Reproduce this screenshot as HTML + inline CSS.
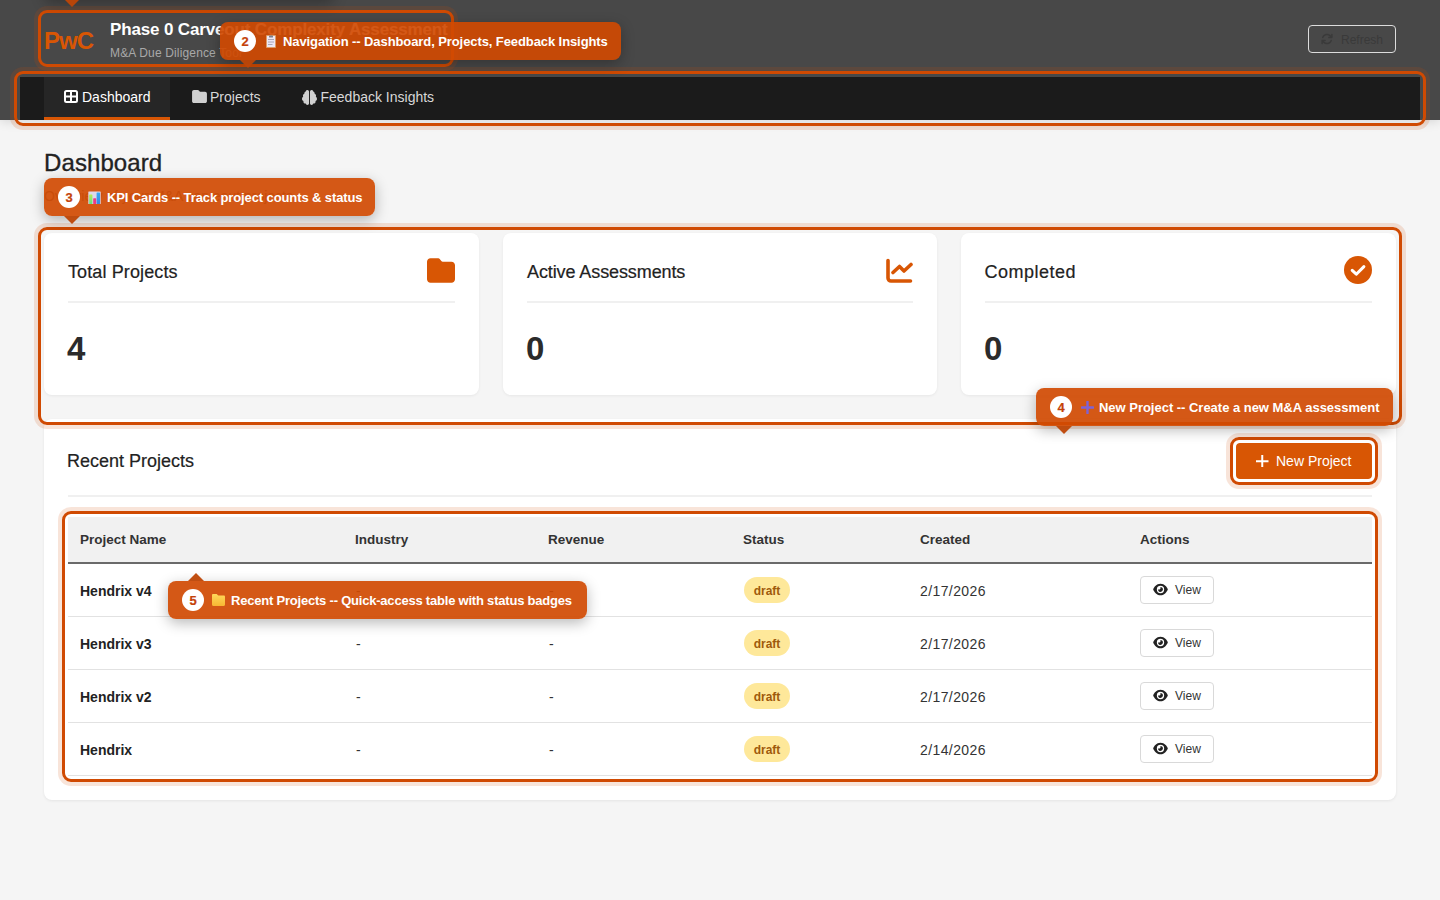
<!DOCTYPE html>
<html>
<head>
<meta charset="utf-8">
<style>
*{box-sizing:border-box;margin:0;padding:0}
html,body{width:1440px;height:900px;overflow:hidden}
body{background:#f5f5f5;font-family:"Liberation Sans",sans-serif;position:relative;color:#222}
.abs{position:absolute;white-space:nowrap}
/* header */
#hdr{position:absolute;left:0;top:0;width:1440px;height:120px;background:#484848;box-shadow:0 2px 10px rgba(0,0,0,0.12)}
#nav{position:absolute;left:20px;top:77px;width:1400px;height:43px;background:#1b1b1b}
.tab{position:absolute;top:0;height:43px}
.tab.active{background:#262626;border-bottom:3px solid #d85604}
.navtxt{font-size:14px;line-height:14px;color:#d8d8d8}
/* rings */
.ring{position:absolute;z-index:5;border:3px solid #d04a02;border-radius:9px;box-shadow:0 0 0 4px rgba(208,74,2,0.15)}
/* cards */
.card{position:absolute;background:#fff;border-radius:8px;box-shadow:0 1px 3px rgba(0,0,0,0.06)}
.kpititle{font-size:18px;line-height:18px;color:#222;-webkit-text-stroke:0.2px #222}
.kpinum{font-size:33px;line-height:33px;font-weight:700;color:#2b2b2b;margin-top:-1px}
.divider{position:absolute;height:2px;background:#f0f0f0}
/* table */
.th{font-size:13.5px;line-height:13px;font-weight:700;color:#333}
.td{font-size:14px;line-height:14px;color:#333;letter-spacing:0.4px}
.tdb{font-size:14px;line-height:14px;font-weight:700;color:#222}
.rowline{position:absolute;left:68px;width:1304px;height:1px;background:#e2e2e2}
.badge{position:absolute;width:46px;height:26px;border-radius:13px;background:#fee89a;color:#9e5a0c;font-size:12px;font-weight:700;line-height:26px;padding-top:1px;text-align:center}
.vbtn{position:absolute;width:74px;height:28px;border:1px solid #d9d9d9;border-radius:4px;background:#fff}
/* tooltips */
.tip{position:absolute;z-index:10;height:38px;border-radius:8px;background:rgba(208,74,2,0.92);box-shadow:0 4px 14px rgba(0,0,0,0.28);color:#fff}
.tipnum{position:absolute;left:14px;top:8px;width:22px;height:22px;border-radius:11px;background:#fff;color:#c4420a;font-size:13px;font-weight:700;line-height:22px;padding-top:1px;text-align:center;-webkit-text-stroke:0.2px #c4420a}
.tiptxt{position:absolute;top:12.6px;font-size:13px;line-height:13px;font-weight:700;color:#fff}
.arrow-dn{position:absolute;z-index:10;width:0;height:0;border-left:8px solid transparent;border-right:8px solid transparent;border-top:8px solid rgba(190,70,6,0.95)}
.arrow-up{position:absolute;z-index:10;width:0;height:0;border-left:8px solid transparent;border-right:8px solid transparent;border-bottom:8px solid rgba(190,70,6,0.95)}
</style>
</head>
<body>

<!-- HEADER -->
<div id="hdr">
  <div class="abs" style="left:44px;top:29px;font-size:24px;line-height:24px;font-weight:700;color:#d85604;letter-spacing:-1px">PwC</div>
  <div class="abs" style="left:110px;top:21px;font-size:17px;line-height:17px;font-weight:700;color:#fff;letter-spacing:-0.15px">Phase 0 Carveout Complexity Assessment</div>
  <div class="abs" style="left:110px;top:47px;font-size:12px;line-height:12px;color:#a9a9a9;letter-spacing:0.15px">M&amp;A Due Diligence Tool</div>
  <div style="position:absolute;left:1308px;top:25px;width:88px;height:28px;border:1px solid #dcdcdc;border-radius:4px">
    <svg style="position:absolute;left:12px;top:7px" width="12" height="12" viewBox="0 0 512 512"><path fill="#3a3a3a" d="M105.1 202.6c7.7-21.8 20.2-42.3 37.8-59.8c62.5-62.5 163.8-62.5 226.3 0L386.3 160H336c-17.7 0-32 14.3-32 32s14.3 32 32 32H463.5c0 0 0 0 0 0h.4c17.7 0 32-14.3 32-32V64c0-17.7-14.3-32-32-32s-32 14.3-32 32v51.2L414.4 97.6c-87.5-87.5-229.3-87.5-316.8 0C73.2 122 55.6 150.7 44.8 181.4c-5.9 16.7 2.9 34.9 19.5 40.8s34.9-2.9 40.8-19.5zM39 289.3c-5 1.5-9.8 4.2-13.7 8.2c-4 4-6.7 8.8-8.1 14c-.3 1.2-.6 2.5-.8 3.8c-.3 1.7-.4 3.4-.4 5.1V448c0 17.7 14.3 32 32 32s32-14.3 32-32V396.9l17.6 17.5 0 0c87.5 87.4 229.3 87.4 316.7 0c24.4-24.4 42.1-53.1 52.9-83.7c5.9-16.7-2.9-34.9-19.5-40.8s-34.9 2.9-40.8 19.5c-7.7 21.8-20.2 42.3-37.8 59.8c-62.5 62.5-163.8 62.5-226.3 0l-.1-.1L125.6 352H176c17.7 0 32-14.3 32-32s-14.3-32-32-32H48.4c-1.6 0-3.2 .1-4.8 .3s-3.1 .5-4.6 1z"/></svg>
    <div class="abs" style="left:32px;top:8px;font-size:12px;line-height:12px;color:#3a3a3a">Refresh</div>
  </div>
</div>

<!-- NAV -->
<div id="nav">
  <div class="tab active" style="left:24px;width:126px"></div>
  <svg style="position:absolute;left:44px;top:13px" width="14" height="13" viewBox="0 0 14 13"><rect x="1" y="1" width="12" height="11" rx="1.5" fill="none" stroke="#fff" stroke-width="2"/><path d="M7 1v11M1 6.5h12" stroke="#fff" stroke-width="2"/></svg>
  <div class="abs navtxt" style="left:62px;top:13px;color:#fff">Dashboard</div>
  <svg style="position:absolute;left:172px;top:13px" width="15" height="13" viewBox="0 0 512 448"><path fill="#d0d0d0" d="M64 448H448c35.3 0 64-28.7 64-64V128c0-35.3-28.7-64-64-64H288c-10.1 0-19.6-4.7-25.6-12.8L243.2 25.6C231.1 9.5 212.1 0 192 0H64C28.7 0 0 28.7 0 64V384c0 35.3 28.7 64 64 64z"/></svg>
  <div class="abs navtxt" style="left:190px;top:13px">Projects</div>
  <svg style="position:absolute;left:282px;top:12.5px" width="15" height="15" viewBox="0 0 512 512"><path fill="#d0d0d0" d="M184 0c30.9 0 56 25.1 56 56V456c0 30.9-25.1 56-56 56c-28.9 0-52.7-21.9-55.7-50.1c-5.2 1.4-10.7 2.1-16.3 2.1c-35.3 0-64-28.7-64-64c0-7.4 1.3-14.6 3.6-21.2C21.4 367.4 0 338.2 0 304c0-31.9 18.7-59.5 45.8-72.3C37.1 220.8 32 207 32 192c0-30.7 21.6-56.3 50.4-62.6C80.8 123.9 80 118 80 112c0-29.9 20.6-55.1 48.3-62.1C131.3 21.9 155.1 0 184 0zM328 0c28.9 0 52.6 21.9 55.7 49.9c27.8 7 48.3 32.1 48.3 62.1c0 6-.8 11.9-2.4 17.4c28.8 6.2 50.4 31.9 50.4 62.6c0 15-5.1 28.8-13.8 39.7C493.3 244.5 512 272.1 512 304c0 34.2-21.4 63.4-51.6 74.8c2.3 6.6 3.6 13.8 3.6 21.2c0 35.3-28.7 64-64 64c-5.6 0-11.1-.7-16.3-2.1c-3 28.2-26.8 50.1-55.7 50.1c-30.9 0-56-25.1-56-56V56c0-30.9 25.1-56 56-56z"/></svg>
  <div class="abs navtxt" style="left:300.5px;top:13px">Feedback Insights</div>
</div>

<!-- header ring -->
<div class="ring" style="left:38px;top:10px;width:416px;height:57px"></div>
<!-- nav ring -->
<div class="ring" style="left:14px;top:71px;width:1412px;height:55px"></div>

<!-- PAGE TITLE -->
<div class="abs" style="left:44px;top:151px;font-size:24px;line-height:24px;color:#222;letter-spacing:0.1px;-webkit-text-stroke:0.35px #222">Dashboard</div>
<div class="abs" style="left:44px;top:189px;font-size:14px;line-height:14px;color:#666">Overview of your M&amp;A carveout projects</div>

<!-- KPI CARDS -->
<div class="card" style="left:44px;top:233px;width:435px;height:162px">
  <div class="abs kpititle" style="left:24px;top:30px;letter-spacing:0.12px">Total Projects</div>
  <svg style="position:absolute;left:383px;top:25px" width="28" height="25" viewBox="0 0 512 448"><path fill="#d85604" d="M64 448H448c35.3 0 64-28.7 64-64V128c0-35.3-28.7-64-64-64H288c-10.1 0-19.6-4.7-25.6-12.8L243.2 25.6C231.1 9.5 212.1 0 192 0H64C28.7 0 0 28.7 0 64V384c0 35.3 28.7 64 64 64z"/></svg>
  <div class="divider" style="left:24px;top:68px;width:387px"></div>
  <div class="abs kpinum" style="left:23px;top:100px">4</div>
</div>
<div class="card" style="left:503px;top:233px;width:434px;height:162px">
  <div class="abs kpititle" style="left:24px;top:30px;letter-spacing:-0.1px">Active Assessments</div>
  <svg style="position:absolute;left:382px;top:25px" width="28" height="25" viewBox="0 0 28 25"><path d="M3 2.5v17.5a3 3 0 0 0 3 3h19.5" fill="none" stroke="#d85604" stroke-width="3.6" stroke-linecap="round" stroke-linejoin="round"/><path d="M8 14.5l6.5-6 4.5 4.5 7-6.5" fill="none" stroke="#d85604" stroke-width="3.6" stroke-linecap="round" stroke-linejoin="round"/></svg>
  <div class="divider" style="left:24px;top:68px;width:386px"></div>
  <div class="abs kpinum" style="left:23px;top:100px">0</div>
</div>
<div class="card" style="left:961px;top:233px;width:435px;height:162px">
  <div class="abs kpititle" style="left:23.5px;top:30px;letter-spacing:0.5px">Completed</div>
  <svg style="position:absolute;left:383px;top:23px" width="28" height="28" viewBox="0 0 28 28"><circle cx="14" cy="14" r="14" fill="#d85604"/><path d="M8.2 14.3l4.1 3.9 7.6-7.6" fill="none" stroke="#fff" stroke-width="3" stroke-linecap="round" stroke-linejoin="round"/></svg>
  <div class="divider" style="left:24px;top:68px;width:387px"></div>
  <div class="abs kpinum" style="left:23px;top:100px">0</div>
</div>
<!-- KPI ring -->
<div class="ring" style="left:38px;top:227px;width:1364px;height:198px"></div>

<!-- RECENT PROJECTS CARD -->
<div class="card" style="left:44px;top:419px;width:1352px;height:381px;box-shadow:0 1px 3px rgba(0,0,0,0.07)">
  <div class="abs" style="left:23px;top:33px;font-size:18px;line-height:18px;color:#222;-webkit-text-stroke:0.2px #222">Recent Projects</div>
  <div style="position:absolute;left:1192px;top:24px;width:136px;height:36px;border-radius:4px;background:#d85604">
    <svg style="position:absolute;left:20px;top:11.5px" width="12.5" height="12.5" viewBox="0 0 12 12"><path d="M6 0v12M0 6h12" stroke="#fff" stroke-width="1.9"/></svg>
    <div class="abs" style="left:40px;top:11px;font-size:14px;line-height:14px;color:#fff">New Project</div>
  </div>
  <div class="divider" style="left:24px;top:76px;width:1304px"></div>
</div>
<!-- new project ring -->
<div class="ring" style="left:1230px;top:437px;width:148px;height:48px;box-shadow:inset 0 0 0 3px #fff,0 0 0 4px rgba(208,74,2,0.15)"></div>

<!-- TABLE -->
<div style="position:absolute;left:68px;top:517px;width:1304px;height:45px;background:#f1f1f1"></div>
<div style="position:absolute;left:68px;top:562px;width:1304px;height:2px;background:#6a6a6a"></div>
<div class="abs th" style="left:80px;top:533px">Project Name</div>
<div class="abs th" style="left:355px;top:533px">Industry</div>
<div class="abs th" style="left:548px;top:533px">Revenue</div>
<div class="abs th" style="left:743px;top:533px">Status</div>
<div class="abs th" style="left:920px;top:533px">Created</div>
<div class="abs th" style="left:1140px;top:533px">Actions</div>

<!-- rows -->
<div class="abs tdb" style="left:80px;top:584px">Hendrix v4</div>
<div class="abs td" style="left:356px;top:584px">-</div>
<div class="abs td" style="left:549px;top:584px">-</div>
<div class="badge" style="left:744px;top:577px">draft</div>
<div class="abs td" style="left:920px;top:584px">2/17/2026</div>
<div class="vbtn" style="left:1140px;top:576px"><svg style="position:absolute;left:12px;top:5.5px" width="15" height="13" viewBox="0 0 576 512"><path fill="#222" d="M288 32c-80.8 0-145.5 36.8-192.6 80.6C48.6 156 17.3 208 2.5 243.7c-3.3 7.9-3.3 16.7 0 24.6C17.3 304 48.6 356 95.4 399.4C142.5 443.200 207.2 480 288 480s145.5-36.8 192.6-80.6c46.8-43.5 78.1-95.4 93-131.100c3.300-7.900 3.300-16.700 0-24.600c-14.9-35.700-46.200-87.700-93-131.100C433.5 68.8 368.8 32 288 32zM144 256a144 144 0 1 1 288 0 144 144 0 1 1 -288 0zm144-64c0 35.3-28.7 64-64 64c-7.1 0-13.900-1.200-20.300-3.300c-5.500-1.800-11.900 1.600-11.700 7.400c.3 6.900 1.300 13.800 3.200 20.700c13.700 51.200 66.400 81.600 117.600 67.900s81.600-66.400 67.900-117.600c-11.100-41.500-47.800-69.400-88.600-71.100c-5.800-.2-9.200 6.100-7.400 11.700c2.100 6.400 3.300 13.200 3.300 20.300z"/></svg><div class="abs" style="left:34px;top:7px;font-size:12px;line-height:12px;color:#333">View</div></div>
<div class="rowline" style="top:616px"></div>
<div class="abs tdb" style="left:80px;top:637px">Hendrix v3</div>
<div class="abs td" style="left:356px;top:637px">-</div>
<div class="abs td" style="left:549px;top:637px">-</div>
<div class="badge" style="left:744px;top:630px">draft</div>
<div class="abs td" style="left:920px;top:637px">2/17/2026</div>
<div class="vbtn" style="left:1140px;top:629px"><svg style="position:absolute;left:12px;top:5.5px" width="15" height="13" viewBox="0 0 576 512"><path fill="#222" d="M288 32c-80.8 0-145.5 36.8-192.6 80.6C48.6 156 17.3 208 2.5 243.7c-3.3 7.9-3.3 16.7 0 24.6C17.3 304 48.6 356 95.4 399.4C142.5 443.200 207.2 480 288 480s145.5-36.8 192.6-80.6c46.8-43.5 78.1-95.4 93-131.100c3.300-7.900 3.300-16.700 0-24.600c-14.9-35.700-46.200-87.700-93-131.100C433.5 68.8 368.8 32 288 32zM144 256a144 144 0 1 1 288 0 144 144 0 1 1 -288 0zm144-64c0 35.3-28.7 64-64 64c-7.1 0-13.900-1.200-20.300-3.300c-5.500-1.800-11.900 1.600-11.700 7.400c.3 6.900 1.300 13.800 3.200 20.700c13.700 51.200 66.400 81.600 117.600 67.900s81.600-66.400 67.900-117.600c-11.100-41.500-47.800-69.400-88.600-71.100c-5.800-.2-9.200 6.100-7.400 11.700c2.100 6.400 3.300 13.200 3.300 20.300z"/></svg><div class="abs" style="left:34px;top:7px;font-size:12px;line-height:12px;color:#333">View</div></div>
<div class="rowline" style="top:669px"></div>
<div class="abs tdb" style="left:80px;top:690px">Hendrix v2</div>
<div class="abs td" style="left:356px;top:690px">-</div>
<div class="abs td" style="left:549px;top:690px">-</div>
<div class="badge" style="left:744px;top:683px">draft</div>
<div class="abs td" style="left:920px;top:690px">2/17/2026</div>
<div class="vbtn" style="left:1140px;top:682px"><svg style="position:absolute;left:12px;top:5.5px" width="15" height="13" viewBox="0 0 576 512"><path fill="#222" d="M288 32c-80.8 0-145.5 36.8-192.6 80.6C48.6 156 17.3 208 2.5 243.7c-3.3 7.9-3.3 16.7 0 24.6C17.3 304 48.6 356 95.4 399.4C142.5 443.200 207.2 480 288 480s145.5-36.8 192.6-80.6c46.8-43.5 78.1-95.4 93-131.100c3.300-7.900 3.300-16.700 0-24.600c-14.9-35.700-46.200-87.700-93-131.100C433.5 68.8 368.8 32 288 32zM144 256a144 144 0 1 1 288 0 144 144 0 1 1 -288 0zm144-64c0 35.3-28.7 64-64 64c-7.1 0-13.900-1.200-20.300-3.300c-5.500-1.800-11.900 1.600-11.700 7.400c.3 6.900 1.300 13.800 3.200 20.700c13.700 51.200 66.400 81.600 117.600 67.900s81.600-66.400 67.900-117.600c-11.100-41.500-47.800-69.400-88.600-71.100c-5.800-.2-9.200 6.100-7.400 11.700c2.100 6.400 3.300 13.200 3.300 20.300z"/></svg><div class="abs" style="left:34px;top:7px;font-size:12px;line-height:12px;color:#333">View</div></div>
<div class="rowline" style="top:722px"></div>
<div class="abs tdb" style="left:80px;top:743px">Hendrix</div>
<div class="abs td" style="left:356px;top:743px">-</div>
<div class="abs td" style="left:549px;top:743px">-</div>
<div class="badge" style="left:744px;top:736px">draft</div>
<div class="abs td" style="left:920px;top:743px">2/14/2026</div>
<div class="vbtn" style="left:1140px;top:735px"><svg style="position:absolute;left:12px;top:5.5px" width="15" height="13" viewBox="0 0 576 512"><path fill="#222" d="M288 32c-80.8 0-145.5 36.8-192.6 80.6C48.6 156 17.3 208 2.5 243.7c-3.3 7.9-3.3 16.7 0 24.6C17.3 304 48.6 356 95.4 399.4C142.5 443.200 207.2 480 288 480s145.5-36.8 192.6-80.6c46.8-43.5 78.1-95.4 93-131.100c3.300-7.900 3.300-16.700 0-24.600c-14.9-35.700-46.200-87.700-93-131.100C433.5 68.8 368.8 32 288 32zM144 256a144 144 0 1 1 288 0 144 144 0 1 1 -288 0zm144-64c0 35.3-28.7 64-64 64c-7.1 0-13.900-1.200-20.300-3.300c-5.500-1.800-11.900 1.600-11.700 7.400c.3 6.900 1.300 13.800 3.200 20.700c13.700 51.200 66.400 81.600 117.600 67.900s81.600-66.400 67.900-117.600c-11.100-41.500-47.800-69.400-88.600-71.100c-5.800-.2-9.200 6.100-7.400 11.700c2.100 6.400 3.300 13.200 3.300 20.300z"/></svg><div class="abs" style="left:34px;top:7px;font-size:12px;line-height:12px;color:#333">View</div></div>
<div class="rowline" style="top:775px"></div>

<!-- table ring -->
<div class="ring" style="left:62px;top:511px;width:1316px;height:271px"></div>

<!-- TOOLTIP 1 arrow (body offscreen) -->
<div class="tip" style="left:44px;top:-39px;width:290px"></div>
<div class="arrow-dn" style="left:64px;top:-1px"></div>

<!-- TOOLTIP 2 -->
<div class="tip" style="left:220px;top:22px;width:401px">
  <div class="tipnum">2</div>
  <svg style="position:absolute;left:46px;top:13px" width="10" height="13" viewBox="0 0 10 13"><rect x="0" y="0" width="10" height="13" rx="0.8" fill="#df9c66"/><rect x="1" y="1" width="8" height="11" fill="#ebe7f5"/><rect x="3" y="0.6" width="4" height="2" rx="0.6" fill="#7d7d8a"/><path d="M2 4.5h6M2 7h6M2 9.5h4.5" stroke="#a9a6b8" stroke-width="1"/></svg>
  <div class="tiptxt" style="left:63px;letter-spacing:-0.09px">Navigation -- Dashboard, Projects, Feedback Insights</div>
</div>
<div class="arrow-dn" style="left:240px;top:60px"></div>

<!-- TOOLTIP 3 -->
<div class="tip" style="left:44px;top:178px;width:331px">
  <div class="tipnum">3</div>
  <svg style="position:absolute;left:44px;top:13px" width="13" height="13" viewBox="0 0 13 13"><defs><linearGradient id="gg" x1="0" y1="0" x2="0" y2="1"><stop offset="0" stop-color="#b8ec52"/><stop offset="1" stop-color="#5ee08a"/></linearGradient><linearGradient id="bg2" x1="0" y1="0" x2="0" y2="1"><stop offset="0" stop-color="#35aaf5"/><stop offset="1" stop-color="#3a86e0"/></linearGradient></defs><rect x="0.3" y="0.5" width="12.4" height="12.5" rx="0.5" fill="#ddd8ea"/><rect x="1.2" y="3.5" width="3.2" height="9.5" rx="0.6" fill="url(#gg)"/><rect x="5.2" y="7.2" width="3" height="5.8" rx="0.6" fill="#ec3a86"/><rect x="8.6" y="1.5" width="3.4" height="11.5" rx="0.6" fill="url(#bg2)"/></svg>
  <div class="tiptxt" style="left:63px;letter-spacing:-0.11px">KPI Cards -- Track project counts &amp; status</div>
</div>
<div class="arrow-dn" style="left:64px;top:216px"></div>

<!-- TOOLTIP 4 -->
<div class="tip" style="left:1036px;top:388px;width:357px">
  <div class="tipnum">4</div>
  <svg style="position:absolute;left:45px;top:13px" width="13" height="13" viewBox="0 0 13 13"><path d="M6.5 0.8v11.4M0.8 6.5h11.4" stroke="#7d62d6" stroke-width="2.4" stroke-linecap="round"/></svg>
  <div class="tiptxt" style="left:63px;letter-spacing:-0.02px">New Project -- Create a new M&amp;A assessment</div>
</div>
<div class="arrow-dn" style="left:1056px;top:426px"></div>

<!-- TOOLTIP 5 -->
<div class="tip" style="left:168px;top:581px;width:419px">
  <div class="tipnum">5</div>
  <svg style="position:absolute;left:44px;top:13px" width="13" height="12" viewBox="0 0 13 12"><defs><linearGradient id="fg" x1="0" y1="0" x2="0" y2="1"><stop offset="0" stop-color="#ffd95a"/><stop offset="1" stop-color="#f7b733"/></linearGradient></defs><path d="M0 1.2C0 .5 .5 0 1.2 0h3.5l1.5 1.6h5.6c.7 0 1.2 .5 1.2 1.2V10.8c0 .7-.5 1.2-1.2 1.2H1.2C.5 12 0 11.5 0 10.8z" fill="url(#fg)"/></svg>
  <div class="tiptxt" style="left:63px;letter-spacing:-0.21px">Recent Projects -- Quick-access table with status badges</div>
</div>
<div class="arrow-up" style="left:188px;top:573px"></div>
</body>
</html>
